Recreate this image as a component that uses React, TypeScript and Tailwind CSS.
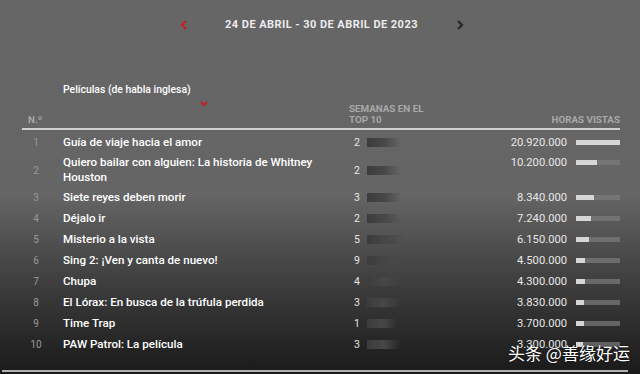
import React from "react";

const rows = [
  { n: 1, t: "Guía de viaje hacia el amor", w: 2, h: "20.920.000", v: 20.92 },
  { n: 2, t: "Quiero bailar con alguien: La historia de Whitney Houston", w: 2, h: "10.200.000", v: 10.2 },
  { n: 3, t: "Siete reyes deben morir", w: 3, h: "8.340.000", v: 8.34 },
  { n: 4, t: "Déjalo ir", w: 2, h: "7.240.000", v: 7.24 },
  { n: 5, t: "Misterio a la vista", w: 5, h: "6.150.000", v: 6.15 },
  { n: 6, t: "Sing 2: ¡Ven y canta de nuevo!", w: 9, h: "4.500.000", v: 4.5 },
  { n: 7, t: "Chupa", w: 4, h: "4.300.000", v: 4.3 },
  { n: 8, t: "El Lórax: En busca de la trúfula perdida", w: 3, h: "3.830.000", v: 3.83 },
  { n: 9, t: "Time Trap", w: 1, h: "3.700.000", v: 3.7 },
  { n: 10, t: "PAW Patrol: La película", w: 3, h: "3.300.000", v: 3.3 },
];

export default function App() {
  return (
    <div
      className="relative w-[640px] h-[374px] overflow-hidden bg-[linear-gradient(to_bottom,#666666_0%,#656565_52%,#3a3a3a_78%,#1e1e1e_97%,#1a1a1a_100%)]"
      style={{ fontFamily: "Roboto, 'Liberation Sans', sans-serif" }}
    >
      <div className="flex items-center justify-center pt-[17px] pl-[12px] h-[33px]">
        <svg width="8" height="10" viewBox="0 0 8 10" className="mr-[37px] ml-[-8px]">
          <path d="M6 1 L2 5 L6 9" stroke="#c0222c" strokeWidth="2.4" fill="none" />
        </svg>
        <span className="text-[11px] font-bold text-[#ececec] tracking-[0.45px] leading-[14px]">
          24 DE ABRIL - 30 DE ABRIL DE 2023
        </span>
        <svg width="8" height="10" viewBox="0 0 8 10" className="ml-[38px]">
          <path d="M2 1 L6 5 L2 9" stroke="#2a2a2a" strokeWidth="2.4" fill="none" />
        </svg>
      </div>

      <div className="pl-[22px] pr-[20px] pt-[50px]">
        <div className="flex">
          <div className="w-[41px]" />
          <div className="w-[286px]">
            <div className="text-[10.4px] font-medium text-white leading-[14px]">Películas (de habla inglesa)</div>
            <div className="pl-[137px] pt-[4px] h-[6px]">
              <svg width="8" height="6" viewBox="0 0 8 6" className="block">
                <path d="M1 1 L4 4 L7 1" stroke="#c0222c" strokeWidth="2.2" fill="none" />
              </svg>
            </div>
          </div>
        </div>
        <div className="flex items-end text-[9.8px] font-bold text-[#a8a8a8] leading-[11px] pb-[3px] border-b-2 border-[#cfcfcf]">
          <div className="w-[41px] pl-[6px]">N.º</div>
          <div className="w-[286px]" />
          <div className="w-[90px] whitespace-nowrap">
            SEMANAS EN EL
            <br />
            TOP 10
          </div>
          <div className="flex-1 text-right">HORAS VISTAS</div>
        </div>

        <div className="pt-[2px]">
          {rows.map((r) => (
            <div key={r.n} className={r.n === 2 ? "flex items-center py-[2px]" : "flex items-center py-[3px]"}>
              <div className="w-[41px] pr-[13px] text-center text-[10px] text-[#9a9a9a] leading-[15px]">{r.n}</div>
              <div className="w-[286px] text-[11.6px] font-medium text-white leading-[15px] pr-[4px]">{r.t}</div>
              <div className="w-[90px] flex items-center">
                <span className="w-[13px] pl-[5px] text-[10.5px] text-[#e6e6e6] leading-[15px]">{r.w}</span>
                <div
                  className="h-[9px] ml-[5px] bg-[linear-gradient(to_right,#3c3c3c,#474747_50%,rgba(80,80,80,0))] blur-[0.6px]"
                  style={{ width: `${30 + r.w * 1.3}px` }}
                />
              </div>
              <div className="flex-1 flex items-start self-start">
                <span className="flex-1 text-right text-[11.2px] text-[#e8e8e8] leading-[15px]">{r.h}</span>
                <div className="ml-[9px] mt-[5px] w-[44px] h-[5px] bg-[#7c7c7c]/70">
                  <div className="h-full bg-[#d6d6d6]" style={{ width: `${(r.v / 20.92) * 100}%` }} />
                </div>
              </div>
            </div>
          ))}
        </div>
      </div>

      <div className="absolute left-[2px] right-[12px] top-[370px] h-[2px] bg-[#b0b0b0]" />
      <div
        className="absolute left-[508px] top-[343px] text-[17px] text-white leading-[20px] [text-shadow:0_0_2px_rgba(0,0,0,0.8)]"
        style={{ fontFamily: "'Noto Sans CJK SC', sans-serif" }}
      >
        头条 @善缘好运
      </div>
    </div>
  );
}
